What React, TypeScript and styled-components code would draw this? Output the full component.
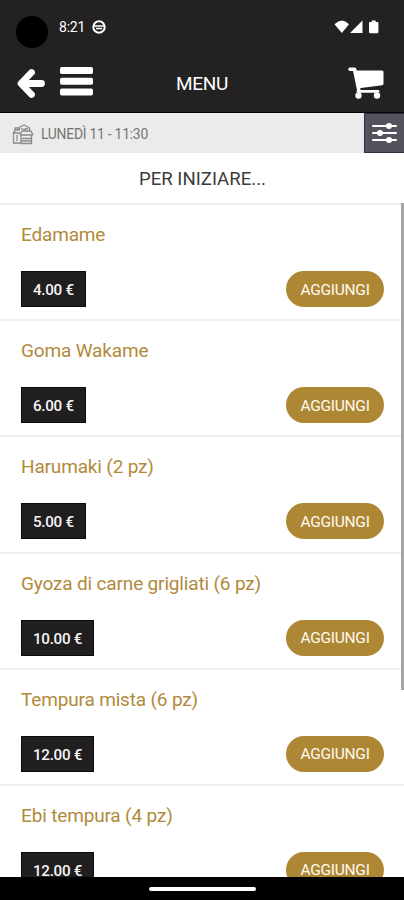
import React from "react";
import styled, { createGlobalStyle } from "styled-components";

const GlobalStyle = createGlobalStyle`
  * { box-sizing: border-box; }
  body { margin: 0; background: #fff; font-family: Roboto, "Liberation Sans", sans-serif; overflow: hidden; }
  svg { display: block; flex: none; }
`;

const Screen = styled.div`
  width: 404px;
  height: 900px;
  display: flex;
  flex-direction: column;
  overflow: hidden;
  background: #fff;
`;

const Header = styled.header`
  flex: none;
  height: 113px;
  background: #232122;
  border-bottom: 1px solid #050505;
  color: #fff;
`;

const StatusBar = styled.div`
  height: 53px;
  padding: 0 24px 0 16px;
  display: flex;
  align-items: center;
`;

const Camera = styled.span`
  width: 32px;
  height: 32px;
  margin-top: 10px;
  border-radius: 50%;
  background: #000;
`;

const Clock = styled.span`
  margin: 0 7px 0 11px;
  width: 26px;
  font-size: 14px;
  letter-spacing: -0.2px;
  white-space: nowrap;
`;

const StatusIcons = styled.div`
  margin-left: auto;
`;

const NavBar = styled.div`
  height: 59px;
  padding: 0 20px 0 16px;
  display: grid;
  grid-template-columns: 104px 1fr 100px;
  align-items: center;
`;

const NavGroup = styled.div<{ $end?: boolean }>`
  display: flex;
  align-items: center;
  gap: 14px;
  justify-content: ${(p) => (p.$end ? "flex-end" : "flex-start")};
`;

const NavTitle = styled.h1`
  margin: 1px 0 0;
  font-size: 19px;
  letter-spacing: -0.3px;
  font-weight: 400;
  text-align: center;
`;

const SlotBar = styled.div`
  flex: none;
  height: 40px;
  display: flex;
  background: #ebebeb;
`;

const Slot = styled.div`
  flex: 1;
  display: flex;
  align-items: center;
  gap: 7px;
  padding: 2px 0 0 12px;
  font-size: 13.9px;
  letter-spacing: -0.25px;
  color: #747474;
`;

const FilterButton = styled.button`
  width: 40px;
  padding: 0 1px 0 0;
  border: 1px solid #2e2c3c;
  border-right: 0;
  background: #53535d;
  display: flex;
  align-items: center;
  justify-content: center;
`;

const Body = styled.main`
  flex: 1;
  min-height: 0;
  overflow: hidden;
  position: relative;
`;

const Section = styled.h2`
  margin: 0;
  height: 52px;
  padding-left: 1px;
  line-height: 53px;
  border-bottom: 2px solid #eeeeee;
  text-align: center;
  font-size: 18.6px;
  font-weight: 400;
  color: #3c3c3c;
`;

const Item = styled.article`
  height: 116.2px;
  padding: 18px 20px 0 21px;
  border-bottom: 2px solid #eeeeee;
`;

const ItemName = styled.h3`
  margin: 0;
  height: 24px;
  line-height: 24px;
  font-size: 19px;
  letter-spacing: -0.16px;
  font-weight: 400;
  color: #b18a3c;
  white-space: nowrap;
`;

const ItemFooter = styled.div`
  margin-top: 24px;
  display: flex;
  justify-content: space-between;
`;

const Price = styled.span`
  height: 36px;
  line-height: 36px;
  padding: 0 11px;
  background: #201e1f;
  border: 1px solid #0c0b0b;
  color: #f5f5f5;
  font-size: 15.2px;
  letter-spacing: -0.3px;
  font-weight: 500;
  white-space: nowrap;
`;

const AddButton = styled.button`
  width: 98px;
  height: 36px;
  padding: 1px 0 0;
  border: 0;
  border-radius: 18px;
  background: #ae8735;
  color: #fffaf0;
  font: 400 15.5px Roboto, sans-serif;
  letter-spacing: -0.25px;
`;

const ScrollThumb = styled.div`
  position: absolute;
  top: 50px;
  right: 0;
  width: 3px;
  height: 487px;
  background: #a4a4a4;
`;

const SystemNav = styled.footer`
  flex: none;
  height: 23px;
  background: #000;
  display: flex;
  align-items: center;
  justify-content: center;
`;

const HomeHandle = styled.span`
  width: 107px;
  height: 4px;
  border-radius: 2px;
  background: #fff;
`;

const ITEMS = [
  ["Edamame", "4.00 €"],
  ["Goma Wakame", "6.00 €"],
  ["Harumaki (2 pz)", "5.00 €"],
  ["Gyoza di carne grigliati (6 pz)", "10.00 €"],
  ["Tempura mista (6 pz)", "12.00 €"],
  ["Ebi tempura (4 pz)", "12.00 €"],
];

export default function App() {
  return (
    <Screen>
      <GlobalStyle />
      <Header>
        <StatusBar>
          <Camera />
          <Clock>8:21</Clock>
          <svg width="14" height="14" viewBox="0 0 14 14" fill="none" stroke="#fff">
            <circle cx="7" cy="7" r="5.7" strokeWidth="2" />
            <path d="M2 6h10M4 8.4h6" strokeWidth="1.5" />
          </svg>
          <StatusIcons>
            <svg width="46" height="14" viewBox="0 0 46 14" fill="#fff">
              <path d="M0.5 4.2Q8 -3 15 4.2L7.8 13z" />
              <path d="M28.5 0.5V13H16z" />
              <path d="M36 2h1.7V.6h4V2h1.7q1 0 1 1v9q0 1.3-1.2 1.3h-7Q35 13.3 35 12V3q0-1 1-1z" />
            </svg>
          </StatusIcons>
        </StatusBar>
        <NavBar>
          <NavGroup>
            <svg width="30" height="32" viewBox="0 0 30 32" fill="none" stroke="#fff" strokeWidth="6.8" strokeLinecap="round" strokeLinejoin="round">
              <path d="M15.500 5.500 5 16.500l10.500 11" />
              <path d="M6 16.500h19.500" />
            </svg>
            <svg width="33" height="31" viewBox="0 0 33 31" fill="#fff">
              <rect y="0" width="33" height="7" rx="1.8" />
              <rect y="10.700" width="33" height="7" rx="1.8" />
              <rect y="21.500" width="33" height="7" rx="1.8" />
            </svg>
          </NavGroup>
          <NavTitle>MENU</NavTitle>
          <NavGroup $end>
            <svg width="36" height="32" viewBox="0 0 36 32" fill="#fff">
              <path d="M2 2.200H6.500L11 24" fill="none" stroke="#fff" strokeWidth="3.600" strokeLinecap="round" strokeLinejoin="round" />
              <path d="M8 3.500h26q1.500 0 1.500 1.500v11.500q0 1.500-1.500 1.800L11 21.300z" />
              <path d="M10 24.300h20" stroke="#fff" strokeWidth="2.800" strokeLinecap="round" />
              <circle cx="10.500" cy="28.500" r="3.200" />
              <circle cx="29" cy="28.500" r="3.200" />
            </svg>
          </NavGroup>
        </NavBar>
      </Header>
      <SlotBar>
        <Slot>
          <svg width="22" height="21" viewBox="0 0 22 21" fill="none" stroke="#8b8b8b" strokeWidth="1.3" strokeLinejoin="round">
            <path d="M1.500 9v10h7.500M1 9l2.500-3H8M1 9h7M9 11v8.500h10.500V11M8 11h13M8 11l2-4h9l2 4M10 14.500h9M9 17h10.500M3 6V4h4M7 6l1-3 4-2 3 1.500L17.500 4v3M9 4.500l3 1 4-1M5 11v6" />
          </svg>
          LUNEDÌ 11 - 11:30
        </Slot>
        <FilterButton aria-label="Filtri">
          <svg width="25" height="22" viewBox="0 0 25 22" stroke="#fff" fill="#fff" strokeWidth="2" strokeLinecap="round">
            <path d="M1 4h23M1 11h23M1 18h23" />
            <circle cx="17" cy="4" r="2" />
            <circle cx="8" cy="11" r="2" />
            <circle cx="17" cy="18" r="2" />
          </svg>
        </FilterButton>
      </SlotBar>
      <Body>
        <Section>PER INIZIARE...</Section>
        {ITEMS.map(([name, price]) => (
          <Item key={name}>
            <ItemName>{name}</ItemName>
            <ItemFooter>
              <Price>{price}</Price>
              <AddButton>AGGIUNGI</AddButton>
            </ItemFooter>
          </Item>
        ))}
        <ScrollThumb />
      </Body>
      <SystemNav>
        <HomeHandle />
      </SystemNav>
    </Screen>
  );
}
